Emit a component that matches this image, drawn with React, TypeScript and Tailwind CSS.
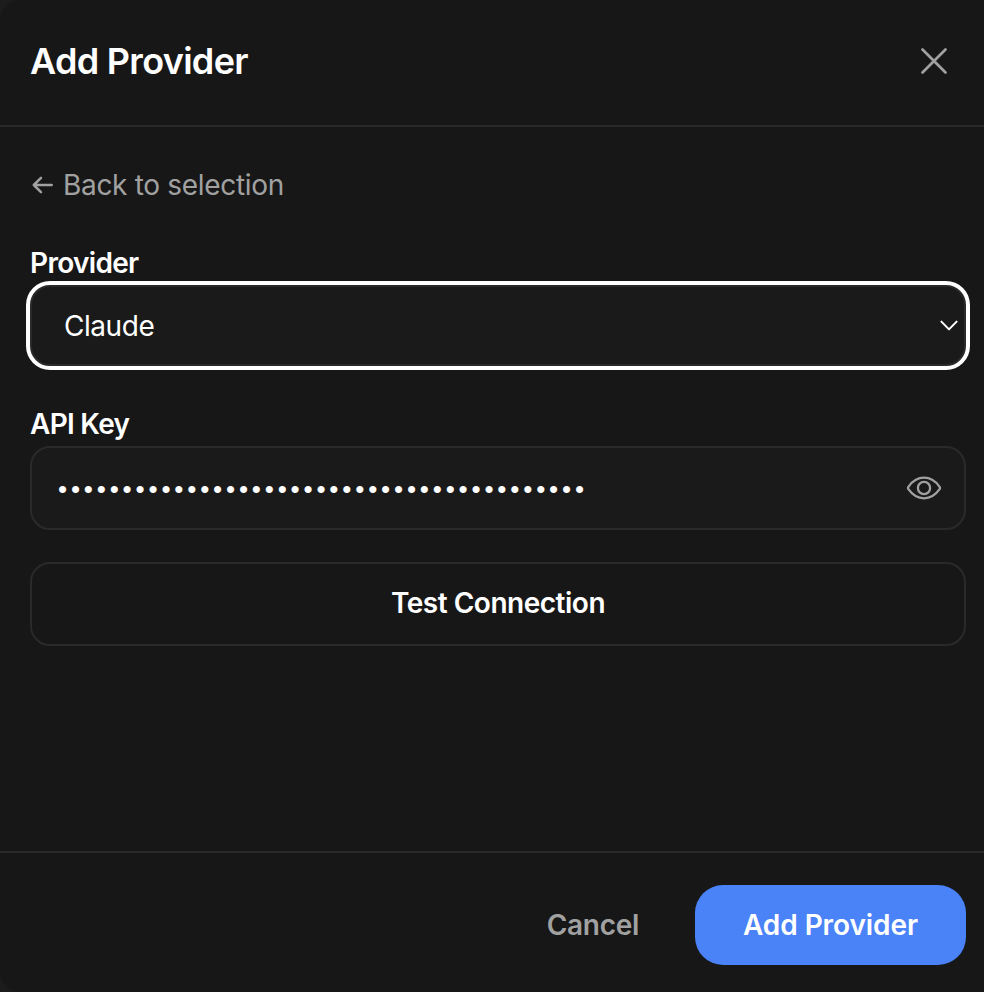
import { useState } from "react";

const apiKey = "x".repeat(41);

function CloseIcon() {
  return (
    <svg width="28" height="28" viewBox="0 0 28 28" fill="none" stroke="currentColor" strokeWidth="2.7" strokeLinecap="round">
      <path d="M2.5 2.5 25.5 25.5M25.5 2.5 2.5 25.5" />
    </svg>
  );
}

function BackIcon() {
  return (
    <svg width="22" height="18" viewBox="0 0 22 18" fill="none" stroke="currentColor" strokeWidth="2.5" strokeLinecap="round" strokeLinejoin="round">
      <path d="M19.700 9H1.800M9 1.900 1.800 9 9 16.100" />
    </svg>
  );
}

function ChevronIcon() {
  return (
    <svg width="18" height="12" viewBox="0 0 18 12" fill="none" stroke="currentColor" strokeWidth="2" strokeLinecap="round" strokeLinejoin="round">
      <path d="M1.400 1.600 9 9.400l7.600-7.800" />
    </svg>
  );
}

function EyeIcon() {
  return (
    <svg width="36" height="24" viewBox="0 0 36 24" fill="none" stroke="currentColor" strokeWidth="2.3" strokeLinejoin="round">
      <path d="M2.4 13.2a2 2 0 0 1 0-2.4C6.6 4.8 12 1.7 18 1.7s11.4 3.1 15.6 9.1a2 2 0 0 1 0 2.4C29.4 19.200 24 22.300 18 22.300S6.600 19.200 2.400 13.200Z" />
      <circle cx="18" cy="12" r="6.1" />
    </svg>
  );
}

export default function App() {
  const [visible, setVisible] = useState(false);

  return (
    <div className="h-[992px] w-[984px] bg-[#1c1c1c] font-['Inter',sans-serif] text-white">
      <div className="flex h-full flex-col rounded-l-[20px] bg-[#171717]">
        {/* Header */}
        <header className="flex h-[127px] items-center justify-between border-b-2 border-[#2a2a2a] pr-9 pl-[30px] pb-[3px]">
          <h1 className="text-[36px] leading-[44px] font-semibold tracking-[-0.7px]">Add Provider</h1>
          <button className="text-[#a1a1a1]" aria-label="Close">
            <CloseIcon />
          </button>
        </header>

        {/* Form */}
        <main className="flex flex-1 flex-col pt-[38px] pr-[18px] pl-[30px]">
          <button className="flex h-10 items-center gap-[9px] self-start pl-[2px] text-[28px] tracking-[-0.31px] text-[#a1a1a1]">
            <BackIcon />
            <span>Back to selection</span>
          </button>

          <label className="mt-[38px] h-10 text-[28px] leading-10 font-semibold tracking-[-0.68px]">Provider</label>
          <div className="mt-[2px] flex h-[81px] items-center justify-between rounded-[20px] border-2 border-[#2a2a2a] bg-[#1a1a1a] pr-[6px] pl-8 text-[28px] tracking-[-0.45px] ring-4 ring-white">
            <span>Claude</span>
            <ChevronIcon />
          </div>

          <label className="mt-[38px] h-10 text-[28px] leading-10 font-semibold tracking-[-0.72px]">API Key</label>
          <div className="mt-[2px] flex h-[84px] items-center justify-between rounded-[20px] border-2 border-[#2a2a2a] bg-[#1a1a1a] pr-[22px] pl-[26px]">
            <span className="pt-[3px] font-['Liberation_Sans',sans-serif] text-[26px] tracking-[3.82px] whitespace-nowrap">
              {visible ? apiKey : "•".repeat(apiKey.length)}
            </span>
            <button className="text-[#a1a1a1]" aria-label="Show API key" onClick={() => setVisible(!visible)}>
              <EyeIcon />
            </button>
          </div>

          <button className="mt-8 h-[84px] rounded-[20px] border-2 border-[#2a2a2a] pb-[2px] text-[28px] font-semibold tracking-[-0.48px]">
            Test Connection
          </button>
        </main>

        {/* Footer */}
        <footer className="flex h-[141px] items-start justify-end gap-14 border-t-2 border-[#2a2a2a] pt-8 pr-[18px] text-[28px] font-semibold">
          <button className="h-20 tracking-[-0.3px] text-[#a1a1a1]">Cancel</button>
          <button className="h-20 w-[271px] rounded-[28px] bg-[#4a82f8] tracking-[-0.08px]">Add Provider</button>
        </footer>
      </div>
    </div>
  );
}
